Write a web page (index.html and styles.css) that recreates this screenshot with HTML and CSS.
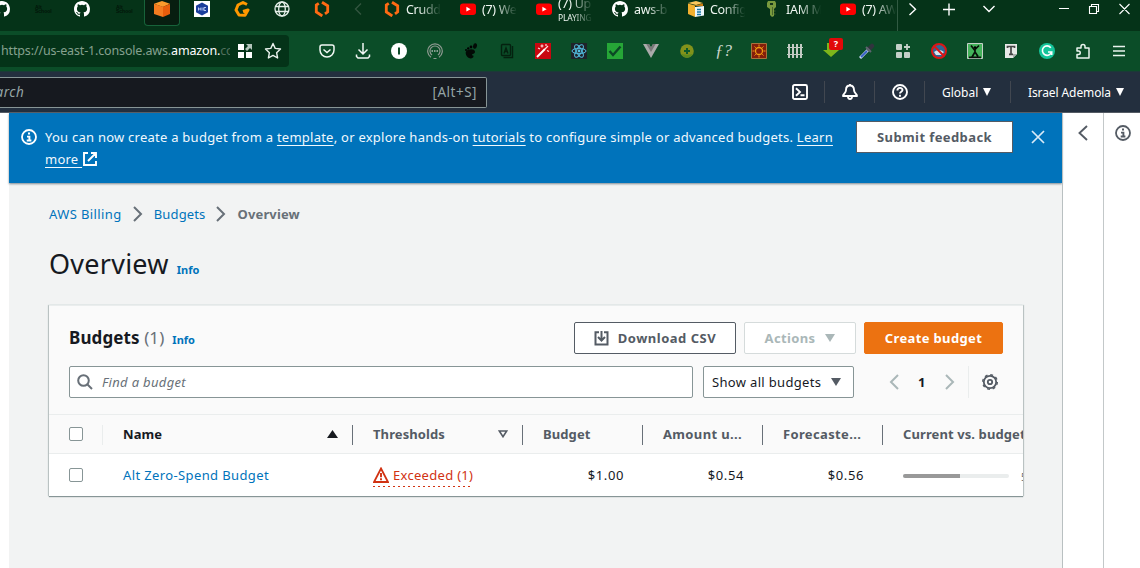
FILE: index.html
```html
<!DOCTYPE html>
<html lang="en">
<head>
<meta charset="utf-8">
<title>AWS Budgets</title>
<link rel="stylesheet" href="styles.css">
</head>
<body>
<svg width="0" height="0" class="defs">
  <symbol id="github" viewBox="0 0 16 16"><path fill="#fff" d="M8 0C3.58 0 0 3.58 0 8c0 3.54 2.29 6.53 5.47 7.59.4.07.55-.17.55-.38 0-.19-.01-.82-.01-1.49-2.01.37-2.53-.49-2.69-.94-.09-.23-.48-.94-.82-1.13-.28-.15-.68-.52-.01-.53.63-.01 1.08.58 1.23.82.72 1.21 1.87.87 2.33.66.07-.52.28-.87.51-1.07-1.78-.2-3.64-.89-3.64-3.95 0-.87.31-1.59.82-2.15-.08-.2-.36-1.02.08-2.12 0 0 .67-.21 2.2.82a7.6 7.6 0 0 1 4 0c1.53-1.04 2.2-.82 2.2-.82.44 1.1.16 1.92.08 2.12.51.56.82 1.27.82 2.15 0 3.07-1.87 3.75-3.65 3.95.29.25.54.73.54 1.48 0 1.07-.01 1.93-.01 2.2 0 .21.15.46.55.38A8 8 0 0 0 16 8c0-4.42-3.58-8-8-8z"/></symbol>
  <symbol id="crudd" viewBox="0 0 16 16"><path fill="none" stroke="#ff6a13" stroke-width="2.800" d="M4.800 2.300 2.300 4v7l6 4M8 1.200 13.700 4.800v6L11 12.800"/></symbol>
  <symbol id="youtube" viewBox="0 0 16 16"><rect y="2.500" width="16" height="11.500" rx="3" fill="#f00"/><path fill="#fff" d="m6.400 5.800 4.200 2.400-4.200 2.400z"/></symbol>
  <symbol id="info" viewBox="0 0 16 16"><circle cx="8" cy="8" r="7" fill="none" stroke="currentColor" stroke-width="1.800"/><path fill="none" stroke="currentColor" stroke-width="1.900" d="M6 7.600h2.400V11M5.700 11.500h4.700"/><path fill="currentColor" d="M7 3.600h2v2H7z"/></symbol>
  <symbol id="next" viewBox="0 0 16 16"><path fill="none" stroke="currentColor" stroke-width="2" d="m4 1 7 7-7 7"/></symbol>
</svg>

<header class="tabs">
  <div class="tab"><svg class="i16"><use href="#github"/></svg></div>
  <div class="tab school">Alt<br>School</div>
  <div class="tab"><svg class="i16"><use href="#github"/></svg></div>
  <div class="tab school small">Alt<br>School</div>
  <div class="tab"><div class="active"><svg class="i16" viewBox="0 0 16 16"><path fill="#fb9a2c" d="m8 0 8 2.800L9 6 0 2.800z"/><path fill="#f47b20" d="m0 2.800 9 3V16l-9-3z"/><path fill="#e85d0c" d="M9 5.800 16 3v10l-7 3z"/></svg></div></div>
  <div class="tab"><svg class="i16" viewBox="0 0 16 16"><path fill="#fff" d="M0 0h16v16H0z"/><path fill="#1b3e9c" d="m8 1.500 6 3.300v6.400l-6 3.300-6-3.300V4.800z"/><path stroke="#b9c9f2" d="M4.500 6.500v3M5 8h2M7 6.500v3M9 6.500v3M12 6.500h-2v3h2" fill="none"/></svg></div>
  <div class="tab"><svg class="i16" viewBox="0 0 16 16"><path fill="none" stroke="#ff9800" stroke-width="3" stroke-linejoin="round" d="M13 3.500 9 1.500 4 4 2 9l3 5 6 .3 3-5.300-5 1.500"/></svg></div>
  <div class="tab"><svg class="i16" viewBox="0 0 16 16"><g fill="none" stroke="#e4efe8" stroke-width="1.300"><circle cx="8" cy="8" r="7"/><ellipse cx="8" cy="8" rx="3.300" ry="7"/><path d="M1.500 5.500h13M1.500 10.500h13"/></g></svg></div>
  <div class="tab"><svg class="i16"><use href="#crudd"/></svg></div>
  <div class="scroll"><svg class="i16" viewBox="0 0 16 16"><path fill="none" stroke="#33553f" stroke-width="1.400" d="M11 2.500 5.500 8l5.500 5.500"/></svg></div>
  <div class="wide"><svg class="i16"><use href="#crudd"/></svg><span>Crudd</span></div>
  <div class="wide"><svg class="i16"><use href="#youtube"/></svg><span>(7) We</span></div>
  <div class="wide"><svg class="i16"><use href="#youtube"/></svg><span class="playing">(7) Up<small>PLAYING</small></span></div>
  <div class="wide"><svg class="i16"><use href="#github"/></svg><span>aws-b</span></div>
  <div class="wide"><svg class="i16" viewBox="0 0 16 16"><path fill="#fcc85c" d="m0 2 8-2 7 2-7 2z"/><path fill="#f2b02f" d="m0 2.500 7 2V16l-7-3z"/><path fill="#c97d10" d="M7 4.500 15 2.500V5H7z"/><path fill="#eef7fb" d="M7 6l9-1v9.500L7 16z"/><path stroke="#1977a8" stroke-width="1.300" d="M9 8.500h4M9 11h4M9 13.500h4"/></svg><span>Config</span></div>
  <div class="wide"><svg class="i16" viewBox="0 0 16 16"><path fill="#799a3e" d="M4 0h7l1 2v4l-2 2v7l-2 1-2-2V8L3 6V2z"/><path fill="#16351b" d="M6 2h3v2H6z"/><path stroke="#49672c" d="M8.500 6v8M10 10h1.500M10 13h1.500"/></svg><span>IAM M</span></div>
  <div class="wide last"><svg class="i16"><use href="#youtube"/></svg><span>(7) AW</span></div>
  <svg class="strip" viewBox="0 0 242 31"><g fill="none" stroke="#fff" stroke-width="1.400"><path d="m11.500 3.500 6 5.700-6 5.700M45 9.500h12M51 3.500v12M85.500 6l5.500 5.500L96.500 6"/><path stroke-width="1.100" d="M161 8.500h10M191.500 6.500h7v7h-7zM193.500 6V4.500h7v7H199M221.500 4l10 10M231.500 4l-10 10"/></g></svg>
</header>

<div class="toolbar">
  <div class="url"><span>https://us-east-1.console.aws.<b>amazon.</b><i>co</i></span>
    <svg width="15" height="15" viewBox="0 0 15 15"><path fill="#fff" d="M0 0h6v6H0zM0 8h6v6H0zM8 8h6v6H8z"/><path fill="#b3c5bb" d="M8 0h6v6l-2-2-3 3-2-2 3-3z"/></svg>
    <svg class="star" width="18" height="18" viewBox="0 0 18 18"><path fill="none" stroke="#e9f1ec" stroke-width="1.400" stroke-linejoin="round" d="m9 1.500 2.200 4.900 5.300.6-3.900 3.700 1 5.300L9 13.400 4.400 16l1-5.300L1.500 7l5.300-.6z"/></svg>
  </div>
  <div class="ext">
    <svg viewBox="0 0 16 16"><g fill="none" stroke="#f1f7f3" stroke-width="1.500"><path d="M3 2h10q2 0 2 2v3a7 7 0 0 1-14 0V4q0-2 2-2z"/><path d="m4.500 6.500 3.500 3 3.500-3"/></g></svg>
    <svg viewBox="0 0 16 16"><path fill="none" stroke="#f1f7f3" stroke-width="1.500" d="M8 0v11M3.500 6.500 8 11l4.500-4.500M1.500 11.500v2l1.500 1.500h10l1.500-1.500v-2"/></svg>
    <svg viewBox="0 0 16 16"><circle cx="8" cy="8" r="8" fill="#fff"/><path fill="#0e4b29" d="M7 4.500h2v7H7z"/></svg>
    <svg viewBox="0 0 16 16"><g fill="none" stroke="#8e9991" stroke-width="1.200"><path d="M4 14.300a7.300 7.300 0 1 1 8 0"/><path d="M5 12a5 5 0 1 1 6 0M6.500 15.500h3"/></g><path stroke="#aeb8b1" stroke-width="1.500" stroke-dasharray="1.500 1" d="M4.500 8h7"/></svg>
    <svg viewBox="0 0 16 16"><path fill="#020a05" d="M3 8.500c2-3 9-3.300 9 .2 0 2.300-3 1.800-3 3.300 0 .8 1.500 0 1.500 1.200C10.500 15 8 16 6 15c-2.500-1.200-4-4.500-3-6.500z"/><ellipse cx="12" cy="3" rx="1.900" ry="2.800" fill="#020a05" transform="rotate(15 12 3)"/><circle cx="8" cy="4" r="1.400"/><circle cx="5.200" cy="5.400" r="1.200"/><circle cx="3" cy="7" r="1"/></svg>
    <svg viewBox="0 0 16 16"><g fill="none" stroke="#04210f" stroke-width="1.400"><rect x="2.500" y="1.500" width="9" height="11" rx="1"/><path d="M4.500 14.500h9V3M5 10.500 7 5l2 5.500M5.500 8.500h3"/></g></svg>
    <svg viewBox="0 0 16 16"><path fill="#c90710" d="M0 0h16v16H0z"/><path stroke="#fff" stroke-width="2" d="m2 14 8-8"/><path stroke="#ffdede" stroke-width="1.200" d="m10 6 3-3M7 1.500v3M5.500 3h3M12 7.500l2 1M11 1v2M3 5l2 1"/></svg>
    <svg viewBox="0 0 16 16"><path fill="#20232a" d="M0 0h16v16H0z"/><g fill="none" stroke="#53bfe2"><ellipse cx="8" cy="8" rx="7" ry="2.700"/><ellipse cx="8" cy="8" rx="7" ry="2.700" transform="rotate(60 8 8)"/><ellipse cx="8" cy="8" rx="7" ry="2.700" transform="rotate(120 8 8)"/></g><circle cx="8" cy="8" r="1.400" fill="#53bfe2"/></svg>
    <svg viewBox="0 0 16 16"><path fill="#26a637" d="M0 0h16v16H0z"/><path fill="none" stroke="#0b4825" stroke-width="2.400" d="m2.500 8 3.500 4 7.500-8.500"/></svg>
    <svg viewBox="0 0 16 16"><path fill="#aaa" d="M0 1h6l2 3.500L10 1h6L8 15z"/><path fill="#777" d="M3.300 1H6l2 3.500L10 1h2.700L8 9z"/></svg>
    <svg viewBox="0 0 16 16"><circle cx="8" cy="8" r="6.800" fill="#82921b"/><path fill="#5c8a20" d="M2 11c4 1 8 1 12 0-3 5-9 5-12 0z"/><path stroke="#0c5a2b" stroke-width="2" d="M5 8h6M8 5v6"/></svg>
    <em class="fq">ƒ?</em>
    <svg viewBox="0 0 16 16"><path fill="#841d0b" stroke="#a8733c" d="M.5.500h15v15H.5z"/><circle cx="8" cy="8" r="3.500" fill="none" stroke="#ef9b12" stroke-width="1.300"/><path stroke="#ef9b12" d="M8 1.500v2M8 12.500v2M1.500 8h2M12.500 8h2M3.500 3.500l1.300 1.300M11.200 11.200l1.300 1.300M3.500 12.500l1.300-1.300M11.200 4.800l1.300-1.300"/></svg>
    <svg viewBox="0 0 16 16"><path stroke="#c3cbc4" stroke-width="2" d="M2 1v14M6 1v14M10 1v14M14 1v14"/><path stroke="#c3cbc4" d="M0 4.500h16M0 11.500h16"/></svg>
    <div class="down"><svg viewBox="0 0 16 16"><path fill="#7eb51b" d="M4 0h7v7h5l-8 7-8-7h4z"/></svg><b>?</b></div>
    <svg viewBox="0 0 16 16"><path stroke="#cbd8f6" stroke-width="3" d="m1 15 8-8"/><path stroke="#355fc4" stroke-width="1.800" d="m2 14 6-6"/><path stroke="#31343e" stroke-width="4.500" stroke-linecap="round" d="m10 6 3-3"/><path stroke="#5e6470" stroke-width="2" d="m7 4 5 5"/></svg>
    <svg viewBox="0 0 16 16"><g fill="#c4d0c8"><rect x="1" y="1" width="6" height="6" rx="1"/><rect x="1" y="9" width="6" height="6" rx="1"/><rect x="9" y="9" width="6" height="6" rx="1"/></g><path stroke="#c4d0c8" stroke-width="1.800" d="M9 4h6M12 1v6"/></svg>
    <svg viewBox="0 0 16 16"><circle cx="8" cy="8" r="6.500" fill="#316696"/><path fill="#d5e4ef" d="M3 9q5-4 10 0l-3 3H5z"/><circle cx="8" cy="8" r="7" fill="none" stroke="#dd1515" stroke-width="2"/><path stroke="#dd1515" stroke-width="2" d="m3 3 10 10"/></svg>
    <svg viewBox="0 0 16 16"><path fill="#44b25b" stroke="#c4d0c8" d="M.5.500h15v15H.5z"/><path fill="none" stroke="#061009" stroke-width="1.700" d="M4 2.500 7.500 7 12 2.500M8 6v4M8 9l-3 5M8 9l3 4.500M2 14.300h12"/><circle cx="8" cy="4.500" r="1.300"/></svg>
    <svg viewBox="0 0 16 16"><path fill="#e8e9e7" d="M2 1h12v10l-4 4H2z"/><path fill="#aaa" d="M10 11h4l-4 4z"/><path fill="none" stroke="#444" stroke-width="1.700" d="M4.500 5V3.500h7V5M8 3.500V11M6 11.300h4"/></svg>
    <svg viewBox="0 0 16 16"><circle cx="8" cy="8" r="8" fill="#15c39a"/><path fill="none" stroke="#fff" stroke-width="1.600" d="M11.800 4.700A4.700 4.700 0 1 0 12.600 9H9M12.700 8.500V12"/></svg>
    <svg viewBox="0 0 16 16"><path fill="none" stroke="#e9f3ed" stroke-width="1.500" stroke-linejoin="round" d="M2 15V11.500h1.500a1.700 1.700 0 0 0 0-3.500H2V5h4V3.500a2 2 0 0 1 4 0V5h4v10z"/></svg>
    <svg viewBox="0 0 16 16"><path stroke="#e9f3ed" stroke-width="1.300" d="M2 3.500h12M2 8h12M2 12.500h12"/></svg>
  </div>
</div>

<nav class="aws">
  <div class="search"><i>Search</i><span>[Alt+S]</span></div>
  <div class="cell"><svg class="i16" viewBox="0 0 16 16"><g fill="none" stroke="#fff" stroke-width="1.900"><rect x="1" y="1" width="14" height="14" rx="1.500"/><path d="m4 4.200 4 3.800-4 3.800M8.500 11.300h4"/></g></svg></div>
  <div class="cell"><svg class="i16" viewBox="0 0 16 16"><path fill="none" stroke="#fff" stroke-width="1.900" stroke-linejoin="round" d="M8 1.500q4 0 4 4.500c0 3 3 4 3 6H1c0-2 3-3 3-6q0-4.500 4-4.500zM6 12.500q0 2.500 2 2.500t2-2.500M8 0v2"/></svg></div>
  <div class="cell"><svg class="i16" viewBox="0 0 16 16"><g fill="none" stroke="#fff" stroke-width="1.900"><circle cx="8" cy="8" r="7"/><path d="M5.400 6.500C5.500 3 10.500 3.200 10.500 6c0 1.700-2.500 1.700-2.500 3.500M8 10.700v2"/></g></svg></div>
  <div class="region"><span>Global</span><i class="tri"></i></div>
  <div class="user"><span>Israel Ademola</span><i class="tri"></i></div>
</nav>

<div class="page">
  <main>
    <div class="flash">
      <svg class="i16"><use href="#info"/></svg>
      <p>You can now create a budget from a <u>template</u>, or explore hands-on <u>tutorials</u> to configure simple or advanced budgets. <u>Learn</u><br><u class="more">more </u><svg width="14" height="14" viewBox="0 0 14 14"><path fill="none" stroke="#fff" stroke-width="1.900" d="M5 1H1v12h12V9M8 1h5v5M13 1 5 9"/></svg></p>
      <button class="feedback">Submit feedback</button>
      <svg class="close" viewBox="0 0 16 16"><path stroke="#d9ebf7" stroke-width="1.700" d="m2 2 12 12M14 2 2 14"/></svg>
    </div>
    <div class="crumbs"><a class="first">AWS Billing</a><svg class="i16"><use href="#next"/></svg><a>Budgets</a><svg class="i16"><use href="#next"/></svg><b>Overview</b></div>
    <div class="title"><h1>Overview</h1><a>Info</a></div>
    <section class="card">
      <div class="head">
        <h2>Budgets <span>(1)</span></h2><a>Info</a>
        <button class="btn csv"><svg width="15" height="15" viewBox="0 0 15 15"><path fill="none" stroke="#545b64" stroke-width="2" d="M5 1.200H1.500v12.300h12V1.200H10M7.500 0v9M4 6l3.500 3.500L11 6"/></svg>Download CSV</button>
        <button class="btn actions">Actions<i class="tri"></i></button>
        <button class="btn create">Create budget</button>
      </div>
      <div class="filters">
        <div class="find"><svg class="i16" viewBox="0 0 16 16"><g fill="none" stroke="#687078" stroke-width="2"><circle cx="6.500" cy="6.500" r="5.300"/><path d="m10.500 10.500 4.500 4.500"/></g></svg>Find a budget</div>
        <div class="select">Show all budgets<i class="tri"></i></div>
        <div class="pager"><svg class="i16 prev"><use href="#next"/></svg><b>1</b><svg class="i16"><use href="#next"/></svg></div>
        <div class="gear"><svg class="i16" viewBox="0 0 16 16"><g fill="none" stroke="#545b64"><circle cx="8" cy="8" r="6.200" stroke-width="1.800"/><circle cx="8" cy="8" r="7.300" stroke-width="1.400" stroke-dasharray="2.870 2.870"/><circle cx="8" cy="8" r="2.200" stroke-width="1.800"/></g></svg></div>
      </div>
      <div class="row th">
        <div class="check"><i class="box"></i></div>
        <div class="c1">Name<svg width="11" height="8" viewBox="0 0 11 8"><path fill="#16191f" d="m5.500 0 5.500 8H0z"/></svg></div>
        <div class="c2">Thresholds<svg width="10" height="8" viewBox="0 0 10 8"><path fill="none" stroke="#545b64" stroke-width="1.600" d="M1.300 1h7.400L5 6.700z"/></svg></div>
        <div class="c3">Budget</div><div class="c3 cut">Amount u...</div><div class="c3 cut">Forecaste...</div><div class="c4">Current vs. budgeted</div>
      </div>
      <div class="row td">
        <div class="check"><i class="box"></i></div>
        <div class="c1"><a>Alt Zero-Spend Budget</a></div>
        <div class="c2"><span class="bad"><svg class="i16" viewBox="0 0 16 16"><path fill="none" stroke="#d13212" stroke-width="1.800" d="M8 1.500 15 15H1z"/><path stroke="#d13212" stroke-width="1.900" d="M8 6v4.200M8 11.300v2"/></svg>Exceeded (1)</span></div>
        <div class="c3">$1.00</div><div class="c3">$0.54</div><div class="c3">$0.56</div>
        <div class="c4"><div class="bar"><i></i></div><small>54.00%</small></div>
      </div>
    </section>
  </main>
  <aside class="back"><svg class="i16" viewBox="0 0 16 16"><path fill="none" stroke="#545b64" stroke-width="1.900" d="m12 1-7.500 7 7.500 7"/></svg></aside>
  <aside class="help"><svg class="i16"><use href="#info"/></svg></aside>
</div>
</body>
</html>
```
FILE: styles.css
```css
* { box-sizing: border-box; }
body { margin: 0; width: 1140px; height: 568px; overflow: hidden; background: #fff; font: 13px/22px "Noto Sans", sans-serif; color: #16191f; }
svg { display: block; flex: none; }
.defs { position: absolute; }
.i16 { width: 16px; height: 16px; }
a { color: #0073bb; }
button { font-family: inherit; padding: 0; }

.tabs { display: flex; height: 31px; padding-top: 1px; background: #053318; color: #f0f7f2; overflow: hidden; }
.tab { flex: none; width: 40px; height: 30px; display: flex; justify-content: center; }
.tab:first-child { margin-left: -18px; }
.tab .active { width: 36px; height: 26px; margin-top: -1px; padding: 1px 9px; background: #071e10; border: 1px solid #17633a; border-top: 0; border-radius: 0 0 4px 4px; }
.school { display: block; font: bold 5px/4px "Liberation Sans", sans-serif; color: #021408; padding: 4px 0 0 13px; }
.school.small { padding-left: 14px; }
.scroll { flex: none; width: 34px; padding-left: 8px; }
.wide { flex: none; width: 76px; height: 30px; padding-left: 8px; display: flex; gap: 6px; }
.wide span { width: 36px; overflow: hidden; white-space: nowrap; line-height: 17px; font-size: 12.500px; letter-spacing: -.3px; -webkit-mask-image: linear-gradient(90deg, #000 35%, transparent 98%); mask-image: linear-gradient(90deg, #000 35%, transparent 98%); }
.wide .playing { margin-top: -6px; line-height: 18px; }
.wide small { display: block; font-size: 8.500px; line-height: 9px; letter-spacing: -.2px; }
.wide.last { width: 66px; border-right: 1px solid #315a42; height: 31px; margin-top: -1px; padding-top: 1px; }
.strip { width: 242px; height: 31px; margin-top: -1px; }

.toolbar { display: flex; align-items: center; height: 40px; background: #0b4d28; }
.url { width: 289px; height: 32px; display: flex; align-items: center; border-radius: 0 4px 4px 0; background: #043318; }
.url span { width: 230px; margin-right: 8px; overflow: hidden; white-space: nowrap; font-size: 12.500px; color: #85a18f; letter-spacing: -.15px; padding-left: 1px; }
.url b { font-weight: normal; color: #fff; }
.url i { font-style: normal; color: #52705d; }
.star { margin-left: 11px; }
.ext { display: flex; align-items: center; margin-left: 20px; }
.ext > * { width: 16px; height: 16px; margin: 0 10px; flex: none; }
.ext .fq { font: italic 17px/15px "Liberation Serif", serif; color: #c9d5cc; white-space: nowrap; }
.down { position: relative; }
.down svg { width: 16px; height: 16px; }
.down b { position: absolute; left: 6px; top: -5px; width: 14px; height: 12px; border-radius: 2px; background: #e10909; color: #fff; font-size: 9px; line-height: 12px; text-align: center; }

.aws { height: 42px; display: flex; align-items: center; background: #232f3e; border-bottom: 1px solid #545b64; border-top: 1px solid #1b3a37; color: #fff; font-size: 12px; }
.search { width: 488px; height: 31px; margin-left: -1px; margin-right: 288px; display: flex; justify-content: space-between; align-items: center; padding-right: 9px; border: 1px solid #879596; border-left: 0; border-radius: 0 2px 2px 0; background: #16191f; color: #95a5a6; font-size: 13.500px; letter-spacing: .5px; }
.search i { margin-left: -18px; }
.cell, .region { height: 22px; border-right: 1px solid #414750; display: flex; align-items: center; }
.cell { width: 50px; padding: 0 17px; }
.region { width: 86px; padding-left: 17px; }
.user { padding-left: 17px; display: flex; align-items: center; white-space: nowrap; letter-spacing: -.1px; }
.region span, .user span { padding-top: 2px; }
.tri { display: inline-block; flex: none; width: 0; height: 0; border: solid transparent; border-width: 8px 4.500px 0; border-top-color: currentColor; margin-left: 5px; }

.page { display: flex; height: 455px; padding-left: 9px; }
main { width: 1053px; background: #f2f3f3; }
.flash { height: 70px; display: flex; align-items: flex-start; padding-left: 12px; background: #0073bb; color: #f1f8fd; box-shadow: 0 1px 2px #7d8992; }
.flash > .i16 { margin-top: 16px; color: #fff; }
.flash p { width: 799px; margin: 13px 12px 0 8px; white-space: nowrap; letter-spacing: .245px; }
.flash p svg { display: inline-block; vertical-align: -2px; margin-left: 1px; }
.flash u { text-underline-offset: 3px; text-decoration-thickness: 1px; }
.flash .more { white-space: pre; }
.feedback { width: 157px; height: 32px; margin-top: 8px; border: 1px solid #545b64; background: #fff; color: #545b64; font-size: 13px; font-weight: bold; letter-spacing: .4px; }
.close { width: 16px; height: 16px; margin: 16px 0 0 17px; }
.crumbs { height: 22px; margin: 20px 0 0 40px; display: flex; align-items: center; color: #687078; letter-spacing: .15px; }
.crumbs .first { letter-spacing: .4px; }
.crumbs svg { margin: 0 8px; }
.title { display: flex; align-items: baseline; margin: 19px 0 0 40px; height: 61px; }
h1 { margin: 0; font-size: 27px; line-height: 40px; font-weight: normal; letter-spacing: .25px; }
.title a, .head a { font-size: 11px; font-weight: bold; margin-left: 8px; }
.card { width: 974px; height: 191px; margin: 0 0 0 40px; overflow: hidden; border-top: 1px solid #eaeded; background: #fafafa; box-shadow: 0 1px 1px #879596, 1px 0 1px #c4cccc, -1px 0 1px #c4cccc; }
.head { height: 60px; display: flex; align-items: center; padding: 4px 20px 0; }
h2 { margin: 0; font-size: 17px; line-height: 22px; letter-spacing: .1px; }
h2 span { font-weight: normal; color: #687078; }
.head a { margin-top: 4px; }
.btn { height: 32px; display: flex; align-items: center; justify-content: center; border: 1px solid #545b64; border-radius: 2px; background: #fff; color: #545b64; font-size: 13px; font-weight: bold; letter-spacing: .35px; }
.csv { width: 162px; margin-left: auto; gap: 9px; letter-spacing: .5px; }
.actions { width: 112px; margin: 0 8px; border-color: #d5dbdb; color: #aab7b8; }
.actions .tri { margin-left: 10px; border-width: 8px 5.500px 0; }
.create { width: 139px; background: #ec7211; border-color: #ec7211; color: #fff; }
.filters { height: 48px; display: flex; padding-left: 20px; }
.find, .select { height: 32px; display: flex; align-items: center; border: 1px solid #879596; border-radius: 2px; background: #fff; letter-spacing: .33px; }
.find { width: 624px; padding-left: 7px; gap: 9px; color: #687078; font-style: italic; }
.select { width: 151px; margin-left: 10px; padding-left: 8px; }
.select .tri { margin-left: 10px; border-width: 8px 5.500px 0; color: #545b64; }
.pager { width: 115px; height: 32px; padding-left: 32px; display: flex; align-items: center; color: #aab7b8; border-right: 1px solid #eaeded; }
.pager b { width: 8px; margin: 0 16px; color: #16191f; }
.prev { transform: scaleX(-1); }
.gear { padding: 8px 0 0 13px; }
.row { width: 1154px; display: flex; border-top: 1px solid #eaeded; }
.row > div { flex: none; height: 100%; display: flex; align-items: center; padding-left: 20px; position: relative; white-space: nowrap; }
.th { height: 39px; color: #545b64; font-weight: bold; letter-spacing: .1px; }
.th .cut { letter-spacing: .35px; }
.td { height: 43px; background: #fff; letter-spacing: .38px; }
.check { width: 54px; }
.row .c1 { width: 250px; color: #16191f; }
.c2 { width: 170px; }
.c3 { width: 120px; }
.c4 { width: 300px; }
.th > div { border-right: 1px solid #687078; border-image: linear-gradient(transparent 10px, #687078 10px, #687078 29px, transparent 29px) 1; border-width: 0 1px 0 0; border-style: solid; }
.th > .check { border-image: linear-gradient(transparent 10px, #eaeded 10px, #eaeded 29px, transparent 29px) 1; }
.th svg { margin-left: auto; margin-right: 14px; }
.td .c3 { justify-content: flex-end; padding-right: 19px; letter-spacing: .6px; }
.box { width: 14px; height: 14px; border: 1px solid #879596; border-radius: 2px; background: #fff; }
.bad { display: flex; align-items: center; gap: 4px; height: 23px; color: #d13212; letter-spacing: .3px; background: repeating-linear-gradient(90deg, #d13212 0 2px, transparent 2px 5px) bottom / 100% 1px no-repeat; }
.bar { width: 106px; height: 4px; border-radius: 2px; overflow: hidden; background: #eaeded; margin-top: 2px; }
.bar i { display: block; width: 54%; height: 4px; background: #999; }
.td small { margin: 3px 0 0 12px; font-size: 10px; color: #687078; }
.back { width: 42px; padding: 12px 0 0 12px; border-left: 1px solid #b9c0c1; border-right: 1px solid #c3c8c9; }
.help { padding: 12px 0 0 11px; color: #545b64; }
```
